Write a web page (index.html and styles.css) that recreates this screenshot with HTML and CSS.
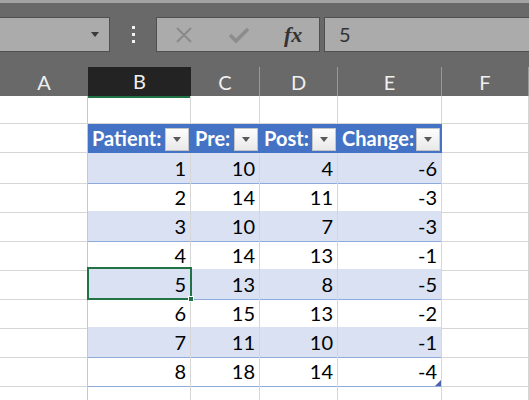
FILE: index.html
```html
<!DOCTYPE html>
<html lang="en">
<head>
    <meta charset="UTF-8">
    <meta name="viewport" content="width=device-width, initial-scale=1.0">
    <title>Patient table</title>
    <link rel="stylesheet" href="styles.css">
</head>
<body>

    <div class="topline"></div>

    <!-- formula bar -->
    <div class="toolbar">
        <div class="namebox"><span class="caret"></span></div>
        <div class="dots"><i></i><i></i><i></i></div>
        <div class="fxbox">
            <svg class="icon-x" width="18" height="18" viewBox="0 0 18 18">
                <path d="M2 2 L16 16 M16 2 L2 16" stroke="#8a8a8a" stroke-width="2" fill="none"/>
            </svg>
            <svg class="icon-ok" width="22" height="18" viewBox="0 0 22 18">
                <path d="M2 9 L8 15 L20 3" stroke="#8c8c8c" stroke-width="3.5" fill="none"/>
            </svg>
            <span class="fx">fx</span>
        </div>
        <div class="formula">5</div>
    </div>

    <!-- column headers -->
    <div class="colheads">
        <div class="ch">A</div>
        <div class="ch active">B</div>
        <div class="ch">C</div>
        <div class="ch">D</div>
        <div class="ch">E</div>
        <div class="ch">F</div>
    </div>

    <!-- sheet -->
    <div class="sheet">
        <div class="row first">
            <div class="cell"></div><div class="cell"></div><div class="cell"></div>
            <div class="cell"></div><div class="cell"></div><div class="cell"></div>
        </div>

        <div class="row">
            <div class="cell"></div>
            <div class="cell th"><span>Patient:</span><span class="filter"></span></div>
            <div class="cell th"><span>Pre:</span><span class="filter"></span></div>
            <div class="cell th"><span>Post:</span><span class="filter"></span></div>
            <div class="cell th"><span>Change:</span><span class="filter"></span></div>
            <div class="cell"></div>
        </div>

        <div class="row band">
            <div class="cell"></div>
            <div class="cell td">1</div><div class="cell td">10</div><div class="cell td">4</div><div class="cell td">-6</div>
            <div class="cell"></div>
        </div>
        <div class="row">
            <div class="cell"></div>
            <div class="cell td">2</div><div class="cell td">14</div><div class="cell td">11</div><div class="cell td">-3</div>
            <div class="cell"></div>
        </div>
        <div class="row band">
            <div class="cell"></div>
            <div class="cell td">3</div><div class="cell td">10</div><div class="cell td">7</div><div class="cell td">-3</div>
            <div class="cell"></div>
        </div>
        <div class="row">
            <div class="cell"></div>
            <div class="cell td">4</div><div class="cell td">14</div><div class="cell td">13</div><div class="cell td">-1</div>
            <div class="cell"></div>
        </div>
        <div class="row band">
            <div class="cell"></div>
            <div class="cell td sel">5</div><div class="cell td">13</div><div class="cell td">8</div><div class="cell td">-5</div>
            <div class="cell"></div>
        </div>
        <div class="row">
            <div class="cell"></div>
            <div class="cell td">6</div><div class="cell td">15</div><div class="cell td">13</div><div class="cell td">-2</div>
            <div class="cell"></div>
        </div>
        <div class="row band">
            <div class="cell"></div>
            <div class="cell td">7</div><div class="cell td">11</div><div class="cell td">10</div><div class="cell td">-1</div>
            <div class="cell"></div>
        </div>
        <div class="row">
            <div class="cell"></div>
            <div class="cell td">8</div><div class="cell td">18</div><div class="cell td">14</div><div class="cell td last">-4</div>
            <div class="cell"></div>
        </div>

        <div class="row">
            <div class="cell"></div><div class="cell"></div><div class="cell"></div>
            <div class="cell"></div><div class="cell"></div><div class="cell"></div>
        </div>
    </div>

</body>
</html>
```

FILE: styles.css
```css
body {
    margin: 0;
    width: 529px;
    height: 400px;
    overflow: hidden;
    background-color: #fff;
    font-family: Lato, "Open Sans", sans-serif;
}

.topline {
    height: 3px;
    background-color: #a3a3a3;
}

/* formula bar */
.toolbar {
    display: flex;
    align-items: flex-start;
    height: 64px;
    padding-top: 14px;
    box-sizing: border-box;
    background-color: #696969;
}

.namebox,
.fxbox,
.formula {
    height: 35px;
    box-sizing: border-box;
    background-color: #ababab;
    border: 1px solid #505050;
}

.namebox {
    width: 110px;
    border-left: none;
    display: flex;
    justify-content: flex-end;
    align-items: center;
    padding-right: 10px;
}

.caret {
    width: 0;
    height: 0;
    border-left: 4px solid transparent;
    border-right: 4px solid transparent;
    border-top: 5px solid #3a3a3a;
}

.dots {
    width: 46px;
    height: 35px;
    display: flex;
    flex-direction: column;
    align-items: center;
    justify-content: center;
    gap: 4px;
}

.dots i {
    display: block;
    width: 3px;
    height: 3px;
    background-color: #f2f2f2;
}

.fxbox {
    width: 164px;
    margin-right: 4px;
    display: flex;
    align-items: center;
    padding-left: 18px;
}

.icon-ok {
    margin-left: 35px;
}

.fx {
    margin-left: 34px;
    font-family: "Liberation Serif", serif;
    font-style: italic;
    font-weight: bold;
    font-size: 22px;
    color: #333;
}

.formula {
    flex: 1;
    border-right: none;
    padding-left: 14px;
    font-size: 20px;
    line-height: 33px;
    color: #333;
}

/* column headers */
.colheads {
    display: grid;
    grid-template-columns: 88px 103px 69px 78px 104px 87px;
    height: 29px;
    background-color: #696969;
}

.ch {
    box-sizing: border-box;
    border-right: 1px solid #9a9a9a;
    color: #f0f0f0;
    font-size: 20px;
    text-align: center;
    line-height: 31px;
}

.ch:first-child {
    border-right: none;
}

.ch.active {
    background-color: #232323;
    border-right: none;
    border-bottom: 2px solid #217346;
    line-height: 29px;
}

/* sheet */
.row {
    display: grid;
    grid-template-columns: 88px 103px 69px 78px 104px 87px;
    height: 29px;
}

.row.first {
    height: 28px;
}

.cell {
    box-sizing: border-box;
    border-right: 1px solid #d6d6d6;
    border-bottom: 1px solid #d6d6d6;
    font-size: 20px;
    color: #000;
}

.cell:first-child {
    border-right-color: #c8c8c8;
}

.th {
    background-color: #4472c4;
    color: #fff;
    font-size: 20px;
    font-weight: bold;
    display: flex;
    justify-content: space-between;
    align-items: center;
    padding-left: 4px;
    padding-right: 1px;
    border-right: 1px solid #4472c4;
    border-bottom: 1px solid #4472c4;
}

.filter {
    position: relative;
    flex: none;
    width: 24px;
    height: 23px;
    box-sizing: border-box;
    background: linear-gradient(#fdfdfd, #e9e9e9);
    border: 1px solid #c4c4c4;
    margin-top: 2px;
}

.filter::after {
    content: '';
    position: absolute;
    left: 7px;
    top: 8px;
    border-left: 4px solid transparent;
    border-right: 4px solid transparent;
    border-top: 5px solid #595959;
}

.td {
    text-align: right;
    padding-right: 4px;
    line-height: 30px;
    border-bottom-color: #8ea9db;
}

.band .td {
    background-color: #d9e1f2;
}

.sel {
    position: relative;
}

.sel::after {
    content: '';
    position: absolute;
    left: -1px;
    top: -2px;
    right: -2px;
    bottom: -1px;
    border: 2px solid #217346;
    z-index: 1;
}

.sel::before {
    content: '';
    position: absolute;
    right: -4px;
    bottom: -3px;
    width: 6px;
    height: 6px;
    background-color: #217346;
    border: 1px solid #fff;
    box-sizing: border-box;
    z-index: 2;
}

.last {
    position: relative;
}

.last::after {
    content: '';
    position: absolute;
    right: 0;
    bottom: 0;
    border-left: 6px solid transparent;
    border-bottom: 6px solid #4f63ad;
}
```
